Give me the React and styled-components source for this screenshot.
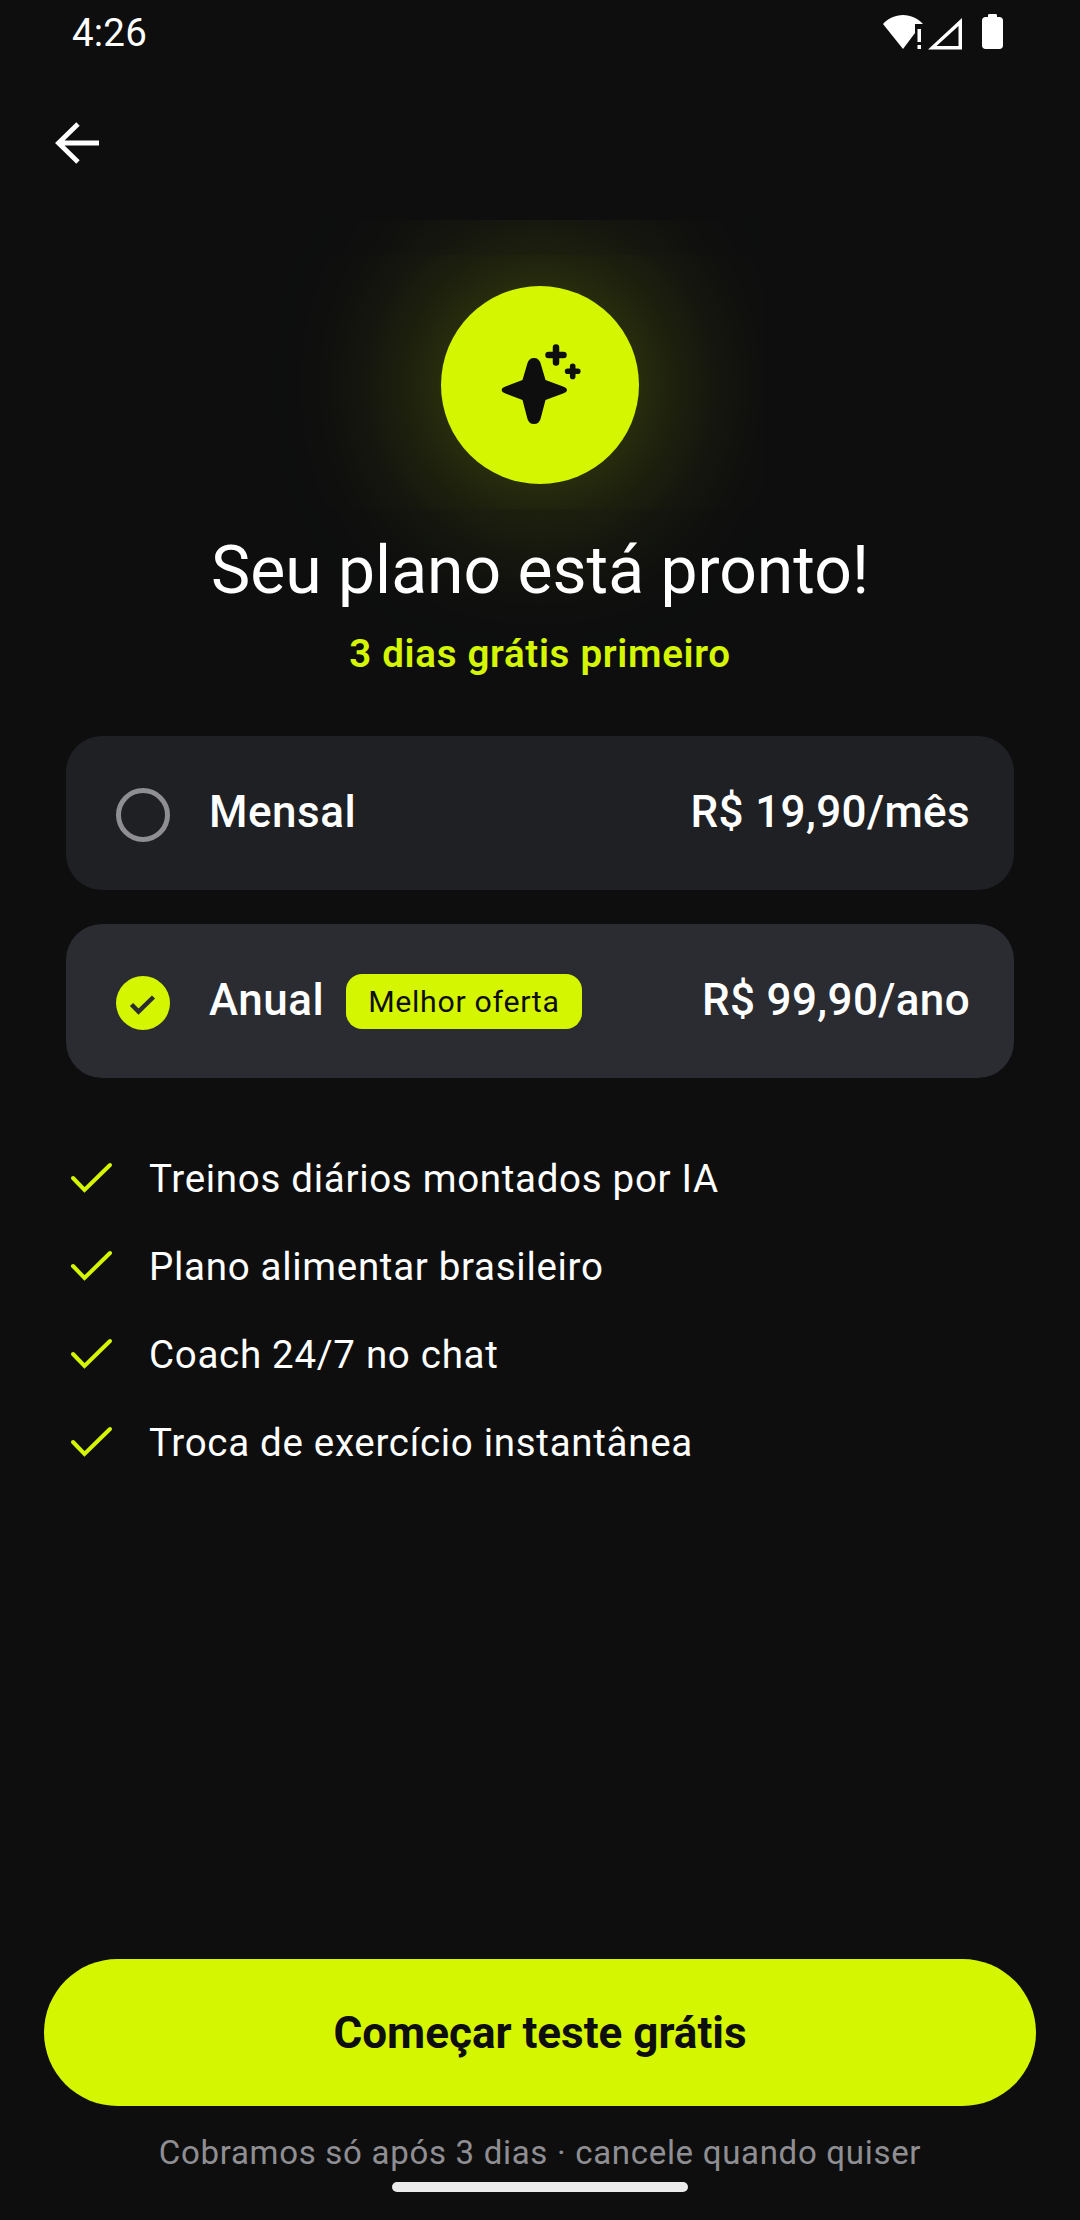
import React from "react";
import styled, { createGlobalStyle } from "styled-components";

const LIME = "#d4f600";

const GlobalStyle = createGlobalStyle`
  html, body {
    margin: 0;
    padding: 0;
    background: #0e0e0f;
  }
  * {
    box-sizing: border-box;
  }
`;

const Screen = styled.div`
  width: 1080px;
  height: 2220px;
  display: flex;
  flex-direction: column;
  background: #0e0e0f;
  color: #fff;
  font-family: Roboto, "Noto Sans", sans-serif;
  overflow: hidden;
`;

const StatusBar = styled.div`
  height: 66px;
  padding: 0 57px 0 72px;
  display: flex;
  align-items: flex-start;
  justify-content: space-between;
`;

const Clock = styled.span`
  margin-top: 11px;
  font-size: 38.5px;
  line-height: 44px;
  letter-spacing: 0.2px;
`;

const StatusIcons = styled.svg`
  display: block;
  width: 140px;
  height: 60px;
`;

const NavBar = styled.div`
  height: 154px;
  padding: 0 0 0 51px;
  display: flex;
  align-items: center;
`;

const BackIcon = styled.svg`
  display: block;
  width: 50px;
  height: 50px;
`;

const Content = styled.div`
  flex: 1;
  display: flex;
  flex-direction: column;
  overflow: hidden;
`;

const Hero = styled.div`
  padding-top: 66px;
  display: flex;
  flex-direction: column;
  align-items: center;
`;

const Badge = styled.div`
  width: 198px;
  height: 198px;
  border-radius: 50%;
  background: ${LIME};
  box-shadow: 0 0 165px rgba(212, 249, 0, 0.4);
  position: relative;
`;

const Sparkle = styled.svg`
  position: absolute;
  left: 39px;
  top: 34px;
  width: 120px;
  height: 120px;
`;

const Title = styled.h1`
  position: relative;
  margin: 42px 0 0;
  font-size: 66px;
  line-height: 90px;
  font-weight: 400;
  text-align: center;
`;

const Subtitle = styled.p`
  position: relative;
  margin: 13px 0 0;
  font-size: 38.5px;
  line-height: 50px;
  font-weight: 600;
  letter-spacing: 0.7px;
  color: ${LIME};
  text-align: center;
`;

const Plans = styled.div`
  margin: 57px 66px 0;
  display: flex;
  flex-direction: column;
  gap: 34px;
`;

const PlanCard = styled.div`
  height: 154px;
  padding: 0 44px 0 50px;
  display: flex;
  align-items: center;
  border-radius: 36px;
  background: ${(p) => (p.$selected ? "#2a2c32" : "#1e2024")};
`;

const Radio = styled.div`
  width: 54px;
  height: 54px;
  flex: none;
  border-radius: 50%;
  border: ${(p) => (p.$selected ? "none" : "5px solid #8e8e93")};
  background: ${(p) => (p.$selected ? LIME : "transparent")};
  margin: 3px 39px 0 0;
`;

const RadioCheck = styled.svg`
  display: block;
  width: 54px;
  height: 54px;
`;

const PlanName = styled.span`
  font-size: 44px;
  line-height: 54px;
  font-weight: 500;
  letter-spacing: 0.5px;
  margin-top: -2px;
`;

const BestOffer = styled.span`
  margin-left: 22px;
  height: 55px;
  padding: 0 22px;
  display: flex;
  align-items: center;
  border-radius: 16px;
  background: ${LIME};
  color: #0e0e0f;
  font-size: 30.25px;
  letter-spacing: 0.7px;
`;

const Price = styled.span`
  margin-left: auto;
  font-size: 44px;
  line-height: 54px;
  font-weight: 500;
  letter-spacing: 0.35px;
  margin-top: -2px;
`;

const Features = styled.ul`
  list-style: none;
  margin: 56px 0 0;
  padding: 0 0 0 69px;
`;

const Feature = styled.li`
  height: 88px;
  display: flex;
  align-items: center;
  gap: 36px;
  font-size: 38.5px;
  letter-spacing: 0.7px;
`;

const FeatureCheck = styled.svg`
  display: block;
  width: 44px;
  height: 34px;
  flex: none;
`;

const Footer = styled.div`
  margin-top: auto;
  padding: 0 44px 28px;
  display: flex;
  flex-direction: column;
  align-items: center;
`;

const CtaButton = styled.button`
  width: 100%;
  height: 147px;
  border: none;
  border-radius: 74px;
  background: ${LIME};
  color: #0e0e0f;
  font-family: inherit;
  font-size: 44px;
  font-weight: 700;
`;

const Note = styled.p`
  margin: 27px 0 0;
  font-size: 33px;
  line-height: 40px;
  letter-spacing: 0.7px;
  color: #8e8e93;
`;

const HomeIndicator = styled.div`
  margin-top: 9px;
  width: 296px;
  height: 10px;
  border-radius: 5px;
  background: #ebebeb;
`;

const features = [
  "Treinos diários montados por IA",
  "Plano alimentar brasileiro",
  "Coach 24/7 no chat",
  "Troca de exercício instantânea",
];

export default function App() {
  return (
    <Screen>
      <GlobalStyle />
      <StatusBar>
        <Clock>4:26</Clock>
        <StatusIcons viewBox="0 0 140 60">
          {/* wifi with the no-internet mark, signal, battery */}
          <path d="M0 24 C5 18.5 12 15 20 15 C28 15 35 18.5 40 24 H32 V33 L20 49 Z" fill="#fff" />
          <path d="M34.5 29 H38 V42 H34.5 Z M34.5 45 H38 V49 H34.5 Z" fill="#fff" />
          <path d="M45 49.5 L79 18 V49.5 Z M53.5 46 H75.5 V26 Z" fill="#fff" fillRule="evenodd" />
          <path d="M105 15.5 C105 14.5 105.5 14 106.5 14 H112.5 C113.5 14 114 14.5 114 15.5 V17 H116.5 C118.5 17 120 18.5 120 20.5 V45.5 C120 47.5 118.5 49 116.5 49 H102.5 C100.5 49 99 47.5 99 45.5 V20.5 C99 18.5 100.5 17 102.5 17 H105 Z" fill="#fff" />
        </StatusIcons>
      </StatusBar>
      <NavBar>
        <BackIcon viewBox="0 0 50 50" fill="none" stroke="#fff" strokeWidth="4.8">
          <path d="M8 25 H48 M27 6 L7.5 25 L27 44" />
        </BackIcon>
      </NavBar>
      <Content>
        <Hero>
          <Badge>
            <Sparkle viewBox="0 0 120 120" fill="#0e0e0f">
              <path d="M54 38 C57.5 38 59.5 40 60.5 43 L65.5 60 L83 66.5 C85.5 67.5 87 68.5 87 70 C87 71.5 85.5 72.5 83 73.5 L65.5 80 L60.5 99 C59.5 102 57.5 104 54 104 C50.5 104 48.5 102 47.5 99 L42.5 80 L25.5 73.5 C23 72.5 21.7 71.5 21.7 70 C21.7 68.5 23 67.5 25.5 66.5 L42.5 60 L47.5 43 C48.5 40 50.5 38 54 38 Z" />
              <path d="M76 27.5 V42.5 M68.5 35 H83.5" stroke="#0e0e0f" strokeWidth="6.5" strokeLinecap="round" />
              <path d="M92.7 46.2 V56.4 M87.6 51.3 H97.8" stroke="#0e0e0f" strokeWidth="5.6" strokeLinecap="round" />
            </Sparkle>
          </Badge>
          <Title>Seu plano está pronto!</Title>
          <Subtitle>3 dias grátis primeiro</Subtitle>
        </Hero>
        <Plans>
          <PlanCard>
            <Radio />
            <PlanName>Mensal</PlanName>
            <Price>R$ 19,90/mês</Price>
          </PlanCard>
          <PlanCard $selected>
            <Radio $selected>
              <RadioCheck viewBox="0 0 54 54" fill="none" stroke="#2a2c32" strokeWidth="4.5">
                <path d="M15.5 28.5 L22.5 35.5 L37.5 21" />
              </RadioCheck>
            </Radio>
            <PlanName>Anual</PlanName>
            <BestOffer>Melhor oferta</BestOffer>
            <Price>R$ 99,90/ano</Price>
          </PlanCard>
        </Plans>
        <Features>
          {features.map((text) => (
            <Feature key={text}>
              <FeatureCheck viewBox="0 0 44 34" fill="none" stroke={LIME} strokeWidth="4" strokeLinecap="round">
                <path d="M4 17 L15.5 29 L41 4" />
              </FeatureCheck>
              {text}
            </Feature>
          ))}
        </Features>
        <Footer>
          <CtaButton>Começar teste grátis</CtaButton>
          <Note>Cobramos só após 3 dias · cancele quando quiser</Note>
          <HomeIndicator />
        </Footer>
      </Content>
    </Screen>
  );
}
